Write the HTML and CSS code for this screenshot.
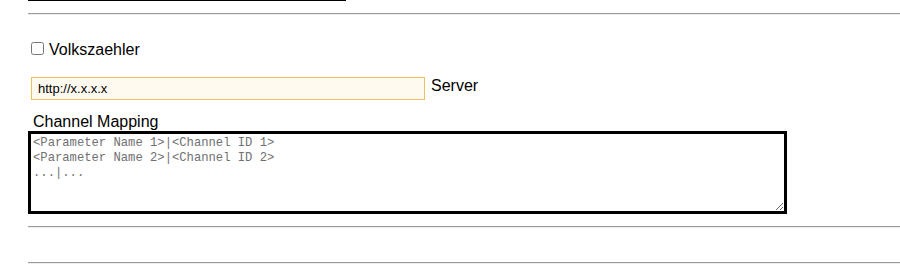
FILE: index.html
```html
<!DOCTYPE html>
<html>
<head>
    <title>Volkszaehler Settings</title>
    <link rel="stylesheet" href="styles.css">
</head>
<body>
    <div class="page">
        <div class="top-rule"></div>
        <hr class="divider first">

        <div class="service">
            <label class="enable"><input type="checkbox" class="enable-box"><span class="enable-text">Volkszaehler</span></label>

            <div class="server-row">
                <input type="text" class="server-input" value="http://x.x.x.x">
                <span class="server-label">Server</span>
            </div>

            <div class="mapping-label">Channel Mapping</div>
            <textarea class="mapping" placeholder="<Parameter Name 1>|<Channel ID 1>
<Parameter Name 2>|<Channel ID 2>
...|..."></textarea>
        </div>

        <hr class="divider">
        <hr class="divider last">
    </div>
</body>
</html>
```

FILE: styles.css
```css
html, body {
    margin: 0;
    background: #fff;
    overflow: hidden;
}

body {
    font-family: "Liberation Sans", Arial, sans-serif;
    font-size: 16px;
    color: #000;
}

.page {
    padding-left: 28px;
}

.top-rule {
    width: 318px;
    height: 1px;
    background: #000;
}

.divider {
    height: 0;
    margin: 0;
    border: 0;
    border-top: 1px solid #9a9a9a;
    border-bottom: 1px solid #eeeeee;
}

.divider.first {
    margin-top: 12px;
}

.service {
    padding-top: 24px;
    padding-bottom: 12px;
}

.enable {
    display: flex;
    align-items: center;
    height: 20px;
    line-height: 20px;
}

.enable-box {
    width: 13px;
    height: 13px;
    margin: 0 5px 0 3px;
    position: relative;
    top: -1px;
}

.enable-text {
    position: relative;
    top: 1px;
}

.server-row {
    display: flex;
    align-items: center;
    margin-top: 18px;
    margin-left: 3px;
}

.server-input {
    box-sizing: border-box;
    width: 394px;
    height: 23px;
    padding: 0 6px;
    border: 1px solid #e9c15e;
    background: #fffaef;
    font-family: "Liberation Sans", Arial, sans-serif;
    font-size: 13px;
    color: #000;
    outline: none;
}

.server-label {
    margin-left: 6px;
    position: relative;
    top: -3px;
}

.mapping-label {
    margin-top: 12px;
    margin-left: 5px;
    line-height: 19px;
}

.mapping {
    display: block;
    box-sizing: border-box;
    width: 759px;
    height: 83px;
    margin: 0;
    padding: 2px;
    border: 3px solid #000;
    font-family: "Liberation Mono", "DejaVu Sans Mono", monospace;
    font-size: 12.2px;
    line-height: 15px;
    resize: both;
    outline: none;
}

.mapping::placeholder {
    color: #707070;
}

.divider.last {
    margin-top: 34px;
}
```
